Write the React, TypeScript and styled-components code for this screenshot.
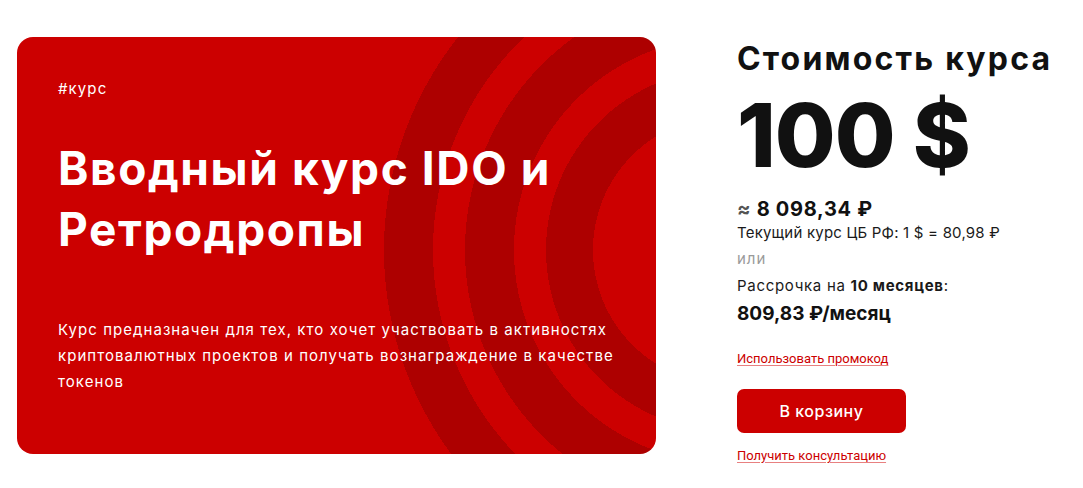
import React from "react";
import styled, { createGlobalStyle } from "styled-components";

const Global = createGlobalStyle`
  * { box-sizing: border-box; }
  body {
    margin: 0;
    background: #ffffff;
    font-family: Inter, "Noto Sans", sans-serif;
    color: #111111;
  }
`;

const Page = styled.div`
  display: flex;
  align-items: flex-start;
  gap: 81px;
  padding: 37px 0 0 17px;
  width: 1083px;
  height: 488px;
  overflow: hidden;
`;

const Card = styled.section`
  flex: 0 0 639px;
  height: 417px;
  border-radius: 16px;
  padding: 42px 41px 0 41px;
  color: #ffffff;
  background: radial-gradient(
    circle at 710px 213px,
    #cc0000 0 134px,
    #ad0000 134px 181px,
    #cc0000 181px 213px,
    #ad0000 213px 262px,
    #cc0000 262px 294px,
    #ad0000 294px 343px,
    #cc0000 343px
  );
  display: flex;
  flex-direction: column;
`;

const Tag = styled.div`
  font-size: 15px;
  line-height: 20px;
  letter-spacing: 1.1px;
`;

const Title = styled.h1`
  margin: 39px 0 0;
  font-size: 46px;
  line-height: 61px;
  font-weight: 700;
  letter-spacing: 1.6px;
`;

const Description = styled.p`
  margin: 57px 0 0;
  font-size: 15px;
  line-height: 26px;
  font-weight: 400;
  letter-spacing: 1.05px;
`;

const Aside = styled.aside`
  display: flex;
  flex-direction: column;
  align-items: flex-start;
  padding-top: 3px;
`;

const Heading = styled.h2`
  margin: 0;
  font-size: 32px;
  line-height: 38px;
  font-weight: 700;
  letter-spacing: 2.2px;
`;

const Price = styled.div`
  margin-top: 13px;
  font-size: 88px;
  line-height: 88px;
  font-weight: 800;
  letter-spacing: -1px;
`;

const Converted = styled.div`
  margin-top: 18px;
  font-size: 20px;
  line-height: 24px;
  font-weight: 700;
  letter-spacing: 0.7px;
`;

const Approx = styled.span`
  color: #555555;
`;

const Line = styled.div<{ $muted?: boolean; $gap: number; $spacing: number }>`
  margin-top: ${(p) => p.$gap}px;
  font-size: 15px;
  line-height: 20px;
  letter-spacing: ${(p) => p.$spacing}px;
  color: ${(p) => (p.$muted ? "#9a9a9a" : "#1a1a1a")};
`;

const Monthly = styled.div`
  margin-top: 6px;
  font-size: 19px;
  line-height: 24px;
  font-weight: 700;
`;

const TextLink = styled.a<{ $gap: number }>`
  margin-top: ${(p) => p.$gap}px;
  font-family: Roboto, "Liberation Sans", sans-serif;
  font-size: 13px;
  line-height: 18px;
  color: #cc0000;
  text-decoration: underline;
  text-decoration-color: #e88080;
  text-underline-offset: 2px;
  cursor: pointer;
`;

const CartButton = styled.button`
  margin-top: 21px;
  width: 169px;
  height: 44px;
  border: none;
  border-radius: 7px;
  background: #cc0000;
  color: #ffffff;
  font-family: Inter, "Noto Sans", sans-serif;
  font-size: 16px;
  font-weight: 500;
  letter-spacing: 0.5px;
  cursor: pointer;
`;

export default function App() {
  return (
    <>
      <Global />
      <Page>
        <Card>
          <Tag>#курс</Tag>
          <Title>
            Вводный курс IDO и
            <br />
            Ретродропы
          </Title>
          <Description>
            Курс предназначен для тех, кто хочет участвовать в активностях
            <br />
            криптовалютных проектов и получать вознаграждение в качестве
            <br />
            токенов
          </Description>
        </Card>
        <Aside>
          <Heading>Стоимость курса</Heading>
          <Price>100 $</Price>
          <Converted>
            <Approx>≈</Approx> 8 098,34 ₽
          </Converted>
          <Line $gap={2} $spacing={0.2}>
            Текущий курс ЦБ РФ: 1 $ = 80,98 ₽
          </Line>
          <Line $gap={6} $spacing={1} $muted>
            или
          </Line>
          <Line $gap={7} $spacing={0.7}>
            Рассрочка на <b>10 месяцев</b>:
          </Line>
          <Monthly>809,83 ₽/месяц</Monthly>
          <TextLink $gap={24}>Использовать промокод</TextLink>
          <CartButton>В корзину</CartButton>
          <TextLink $gap={14}>Получить консультацию</TextLink>
        </Aside>
      </Page>
    </>
  );
}
